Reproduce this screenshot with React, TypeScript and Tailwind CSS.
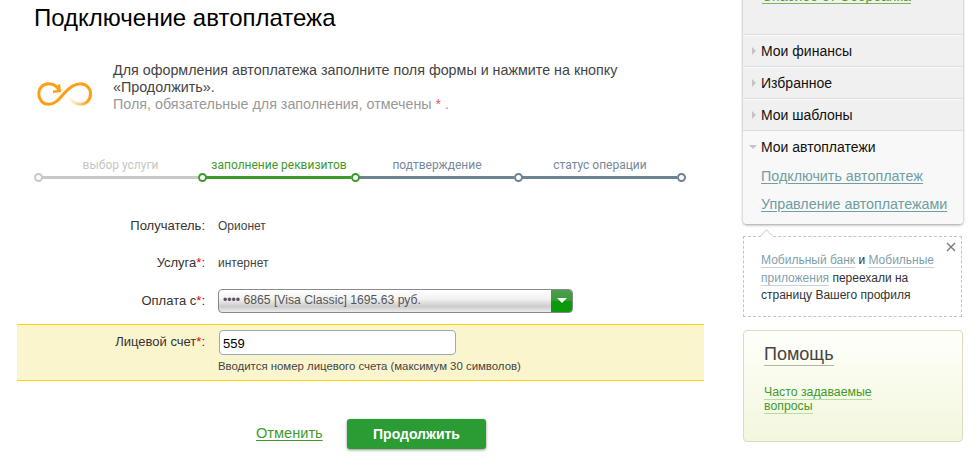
// App.tsx
// Autopayment form page with the right-hand account sidebar

const SANS = 'font-["Liberation_Sans",Arial,sans-serif]'

const steps = [
  { label: 'выбор услуги', width: 'w-[164px]', text: 'text-[#c6c6c6]', line: 'bg-[#c8c8c8]', dot: 'border-[#c8c8c8]' },
  { label: 'заполнение реквизитов', width: 'w-[153px]', text: 'text-[#3f9a2c]', line: 'bg-[#3f9a2c]', dot: 'border-[#3f9a2c]' },
  { label: 'подтверждение', width: 'w-[163px]', text: 'text-[#76889a]', line: 'bg-[#6f8292]', dot: 'border-[#3f9a2c]' },
  { label: 'статус операции', width: 'w-[163px]', text: 'text-[#76889a]', line: 'bg-[#6f8292]', dot: 'border-[#6f8292]' },
]

function Stepper() {
  return (
    <div className="ml-[34px] flex w-[652px] items-end">
      {steps.map((s) => (
        <div key={s.label} className={`${s.width} relative flex flex-col`}>
          <div className={`${s.text} mb-[1px] ml-[9px] text-center font-["Roboto",sans-serif] text-[12px] leading-[14px]`}>
            {s.label}
          </div>
          <div className="flex h-[9px] items-center">
            <div className={`${s.dot} z-10 -mr-px h-[9px] w-[9px] shrink-0 rounded-full border-2 bg-white`} />
            <div className={`${s.line} h-[3px] flex-1`} />
          </div>
        </div>
      ))}
      <div className="h-[9px] w-[9px] shrink-0 rounded-full border-2 border-[#6f8292] bg-white" />
    </div>
  )
}

function Row({ label, value }: { label: string; value: string }) {
  return (
    <div className="flex h-[37px] items-center">
      <div className="w-[205px] text-right text-[13px] text-[#333]">
        {label === 'Услуга' ? (
          <>
            {label}
            <span className="text-[#e00]">*</span>:
          </>
        ) : (
          label
        )}
      </div>
      <div className="ml-[13px] text-[12px] text-[#444]">{value}</div>
    </div>
  )
}

function InfinityIcon() {
  return (
    <svg width="56" height="24" viewBox="0 0 56 24" fill="none" className="mt-[20px] shrink-0">
      <defs>
        <linearGradient id="fade" x1="32" y1="18" x2="50" y2="14" gradientUnits="userSpaceOnUse">
          <stop offset="0" stopColor="#ff9e12" stopOpacity="0.05" />
          <stop offset="1" stopColor="#ff9e12" />
        </linearGradient>
      </defs>
      <path
        d="M22.5 9C20 4 16 1.8 11.5 1.8C5.5 1.8 1.8 6.5 1.8 12C1.8 17.5 5.5 22.2 11.5 22.2C19 22.2 23 16 27 11.5C31 7 36 1.8 43.5 1.8C49.5 1.8 53.5 6.5 53.5 12"
        stroke="#ff9e12"
        strokeWidth="3"
      />
      <path d="M53.5 12C53.5 17.5 49.5 22.2 43.5 22.2C38 22.2 35 20 31 15.5" stroke="url(#fade)" strokeWidth="3" />
      <path d="M16 9.7L22.7 9L22 2.3" stroke="#ff9e12" strokeWidth="2.4" />
    </svg>
  )
}

function Sidebar() {
  return (
    <aside className="ml-[-1px] w-[222px] shrink-0">
      <div className="-mt-[20px] w-[220px] overflow-hidden rounded-b-[4px] bg-[#f0f0f0] shadow-[0_1px_3px_rgba(0,0,0,0.4)]">
        <div className="h-[55px] border-b border-[#dcdcdc] pl-[19px] pt-[9px]">
          <div className="w-fit border-b border-[#7fb45a] text-[14px] leading-[14px] text-[#5a9a3a]">
            Спасибо от Сбербанка
          </div>
        </div>
        {['Мои финансы', 'Избранное', 'Мои шаблоны'].map((item) => (
          <div key={item} className="flex h-[32px] items-center border-b border-t border-b-[#dcdcdc] border-t-white/70 pl-[9px] text-[14px] text-[#111]">
            <span className="mr-[5px] h-0 w-0 border-y-[4px] border-l-[4px] border-y-transparent border-l-[#c4c4c4]" />
            {item}
          </div>
        ))}
        <div className="bg-[#f8f8f8] pb-[10px]">
          <div className="flex h-[32px] items-center pl-[6px] text-[14px] text-[#111]">
            <span className="mr-[4px] h-0 w-0 border-x-[4px] border-t-[4px] border-x-transparent border-t-[#c4c4c4]" />
            Мои автоплатежи
          </div>
          <div className="ml-[18px] mt-[3px] flex flex-col items-start gap-[8px] text-[14.3px] leading-[20px] text-[#6f9ea3]">
            <a className="underline underline-offset-2">Подключить автоплатеж</a>
            <a className="underline underline-offset-2">Управление автоплатежами</a>
          </div>
        </div>
      </div>

      <div className="relative mt-[12px] h-[81px] w-[219px] border border-dashed border-[#c4c4c4] pl-[17px] pt-[15px] text-[12px] leading-[17.5px] text-[#333]">
        <span className="absolute left-[18px] top-[-6px] h-[9px] w-[9px] rotate-45 border-l border-t border-[#d4d4d4] bg-white" />
        <svg width="10" height="10" viewBox="0 0 10 10" className="absolute right-[5px] top-[5px]">
          <path d="M1 1L9 9M9 1L1 9" stroke="#777" strokeWidth="1.3" />
        </svg>
        <span className="border-b border-[#c4d2d8] text-[#7f9fae]">Мобильный банк</span> и{' '}
        <span className="border-b border-[#c4d2d8] text-[#7f9fae]">Мобильные приложения</span> переехали на страницу Вашего профиля
      </div>

      <div className="mt-[13px] h-[112px] w-[220px] rounded-[4px] border border-[#ddd9c3] bg-gradient-to-b from-[#fffffb] to-[#f2f7dc] pl-[20px] pt-[12px]">
        <div className="inline-block border-b border-[#b5b5a5] text-[18px] leading-[22px] text-[#444]">Помощь</div>
        <div className="mt-[18px] w-[120px] text-[12.3px] leading-[14px] text-[#3f9a2c]">
          <span className="border-b border-[#b6dd9c]">Часто задаваемые</span>{' '}
          <span className="border-b border-[#b6dd9c]">вопросы</span>
        </div>
      </div>
    </aside>
  )
}

export default function App() {
  return (
    <div className={`${SANS} flex h-[471px] w-[978px] overflow-hidden bg-white`}>
      <main className="w-[744px] shrink-0">
        <h1 className="ml-[34px] mt-[5px] text-[24px] leading-[26px] text-black">Подключение автоплатежа</h1>

        <div className="ml-[37px] mt-[31px] flex items-start">
          <InfinityIcon />
          <div className="ml-[20px] w-[540px] text-[14.3px] leading-[17px] text-[#444]">
            Для оформления автоплатежа заполните поля формы и нажмите на кнопку
            <br />
            «Продолжить».
            <br />
            <span className="text-[#999]">
              Поля, обязательные для заполнения, отмечены <span className="text-[#e0605a]">*</span> .
            </span>
          </div>
        </div>

        <div className="mt-[45px]">
          <Stepper />
        </div>

        <div className="mt-[25px]">
          <Row label="Получатель:" value="Орионет" />
          <Row label="Услуга" value="интернет" />

          <div className="mt-[6px] flex h-[27px] items-center">
            <div className="w-[205px] text-right text-[13px] text-[#333]">
              Оплата с<span className="text-[#e00]">*</span>:
            </div>
            <div className="ml-[13px] flex h-[24px] w-[355px] overflow-hidden rounded-[4px] border border-[#8a8a8a] bg-[linear-gradient(#ffffff_0%,#f2f2f2_40%,#cccccc_75%,#ececec_100%)]">
              <div className="flex-1 pl-[4px] text-[12.2px] leading-[21px] text-[#555]">•••• 6865 [Visa Classic] 1695.63 руб.</div>
              <div className="flex w-[21px] items-center justify-center bg-[linear-gradient(#4c9f4c_0%,#3a9a3a_50%,#0a9a0a_52%,#0a9a0a_100%)]">
                <span className="h-0 w-0 border-x-[5px] border-t-[5px] border-x-transparent border-t-white" />
              </div>
            </div>
          </div>

          <div className="ml-[17px] mt-[10px] h-[57px] w-[687px] border-y border-[#ffd200] bg-[#fbf5cd] pt-[5px]">
            <div className="flex items-start">
              <div className="w-[188px] pt-[4px] text-right text-[13px] leading-[16px] text-[#333]">
                Лицевой счет<span className="text-[#e00]">*</span>:
              </div>
              <div className="ml-[14px] h-[25px] w-[237px] rounded-[4px] border border-[#9aaabb] bg-white pl-[3px] text-[13px] leading-[25px] text-black">
                559
              </div>
            </div>
            <div className="ml-[201px] mt-[4px] text-[11.4px] leading-[14px] text-[#444]">
              Вводится номер лицевого счета (максимум 30 символов)
            </div>
          </div>
        </div>

        <div className="ml-[256px] mt-[38px] flex items-center">
          <a className="w-[67px] text-[14.6px] text-[#3f9a2c] underline underline-offset-2">Отменить</a>
          <button className="ml-[24px] h-[30px] w-[139px] rounded-[3px] bg-[#2a9c33] text-[14px] font-bold text-white shadow-[0_1px_3px_rgba(0,0,0,0.45)]">
            Продолжить
          </button>
        </div>
      </main>
      <Sidebar />
    </div>
  )
}
